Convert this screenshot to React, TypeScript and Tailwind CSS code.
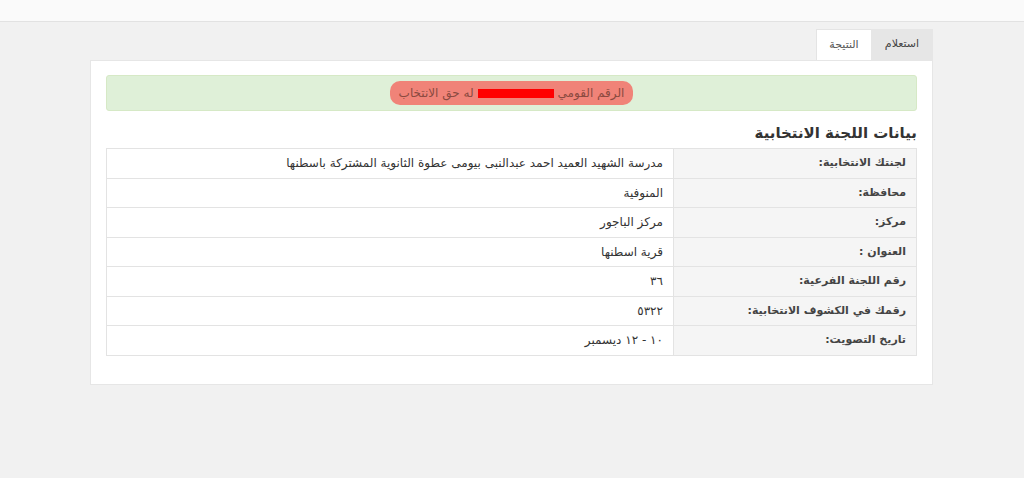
import React from "react";

const rows: [string, string][] = [
  ["لجنتك الانتخابية:", "مدرسة الشهيد العميد احمد عبدالنبى بيومى عطوة الثانوية المشتركة باسطنها"],
  ["محافظة:", "المنوفية"],
  ["مركز:", "مركز الباجور"],
  ["العنوان :", "قرية اسطنها"],
  ["رقم اللجنة الفرعية:", "٣٦"],
  ["رقمك في الكشوف الانتخابية:", "٥٣٢٢"],
  ["تاريخ التصويت:", "١٠ - ١٢ ديسمبر"],
];

export default function App() {
  return (
    <div
      className="w-[1024px] h-[478px] bg-[#f1f1f1] overflow-hidden text-[#333]"
      style={{ fontFamily: '"DejaVu Sans", "Noto Sans", sans-serif' }}
    >
      <div className="h-[22px] bg-[#fafafa] border-b border-[#e2e2e2]" />
      <div className="ml-[90px] w-[843px] pt-[7px]" dir="rtl">
        <div className="flex h-[31px]">
          <div className="w-[62px] bg-[#e6e6e6] flex items-center justify-center text-[11px] text-[#444]">
            استعلام
          </div>
          <div className="w-[55px] bg-white border-t border-l border-[#e4e4e4] flex items-center justify-center text-[11px] text-[#555]">
            النتيجة
          </div>
        </div>
        <div className="bg-white border border-[#e6e6e6] px-[15px] pt-[14px] pb-[28px]">
          <div className="h-[36px] bg-[#dff0d8] border border-[#d6e9c6] rounded-[3px] flex items-center justify-center">
            <span className="bg-[#f08378] rounded-[10px] px-[9px] py-[3px] text-[12px] text-[#8a4a40] flex items-center gap-[4px]">
              <span>الرقم القومي</span>
              <span className="inline-block w-[76px] h-[9px] bg-[#ff0000]" />
              <span>له حق الانتخاب</span>
            </span>
          </div>
          <h3 className="mt-[12px] mb-[5px] text-[15px] font-bold text-[#333] leading-[20px]">
            بيانات اللجنة الانتخابية
          </h3>
          <table className="w-full border-collapse border border-[#e3e3e3] text-[12px]">
            <tbody>
              {rows.map(([k, v]) => (
                <tr key={k} className="h-[29.5px]">
                  <td className="w-[30%] bg-[#f5f5f5] border border-[#e3e3e3] px-[10px] text-[11px] font-bold text-[#444]">
                    {k}
                  </td>
                  <td className="border border-[#e3e3e3] px-[10px] text-[12px] text-[#333]">{v}</td>
                </tr>
              ))}
            </tbody>
          </table>
        </div>
      </div>
    </div>
  );
}
